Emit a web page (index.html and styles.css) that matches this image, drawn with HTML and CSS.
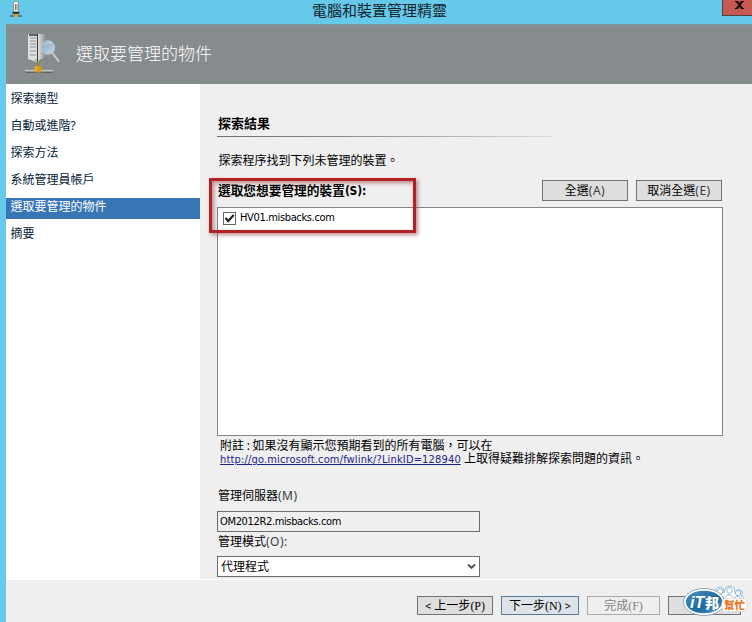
FILE: index.html
```html
<!DOCTYPE html>
<html lang="zh-Hant">
<head>
<meta charset="utf-8">
<title>電腦和裝置管理精靈</title>
<link rel="stylesheet" href="styles.css">
</head>
<body>
<div class="window">
  <header class="titlebar">
    <svg class="app-icon" width="14" height="18" viewBox="0 0 14 18">
      <path d="M4.500 1.500h5v10h-5z" fill="#f4f3ed" stroke="#8a9490"/>
      <path d="M6.500 4v6M8 4v6" stroke="#59605f" stroke-width=".8"/>
      <path d="M3 12h8l-1 2H4z" fill="#384044"/>
      <path d="M1 16h12" stroke="#5b685a" stroke-width="1.500"/>
      <path d="M5 14h4v3H5z" fill="#d4a12c"/>
    </svg>
    <h1 class="window-title">電腦和裝置管理精靈</h1>
    <div class="close"><svg width="9" height="8" viewBox="0 0 9 8"><path d="M0 0h3l1.500 2L6 0h3v1H8L5.800 3.900 8 7h1v1H6L4.500 5.700 3 8H0V7h1l2.200-3.100L1 1H0z" fill="#1d0808"/></svg></div>
  </header>
  <div class="frame">
    <div class="banner">
      <svg class="banner-icon" width="38" height="42" viewBox="0 0 38 42">
        <defs>
          <linearGradient id="side" x1="0" x2="1"><stop stop-color="#e2e2e2"/><stop offset="1" stop-color="#858889"/></linearGradient>
          <linearGradient id="lens" x1="0" y1="0" x2="1" y2="1"><stop stop-color="#86a6c2"/><stop offset="1" stop-color="#c9d9e4"/></linearGradient>
        </defs>
        <path d="M4 1h9v28l-9-3z" fill="#dedfe0"/>
        <path d="M5 2h8" stroke="#363a3c" stroke-width="1.500"/>
        <path d="M6 5h6M6 8h6M6 11h6M6 14h6M6 18h6M6 22h6" stroke="#8a8e91"/>
        <path d="M14 1h8v22l-8 6z" fill="url(#side)"/>
        <path d="M13.500 1v28" stroke="#303436"/>
        <path d="M28.500 20l6 8" stroke="#cfcbcc" stroke-width="2" stroke-linecap="round"/>
        <circle cx="24" cy="14.500" r="6.800" fill="url(#lens)" stroke="#b7c8d4"/>
        <path d="M20 13q3-5 8-3" fill="none" stroke="#eef6fb" opacity=".6"/>
        <path d="M11 26l3 3 3-3" fill="none" stroke="#77a34c"/>
        <path d="M14 29v5" stroke="#a77e20" stroke-width="2"/>
        <rect x="1" y="36" width="28" height="4" rx="1" fill="#5f6263"/>
        <path d="M1 37.500h28" stroke="#c6c7c7" stroke-width="2"/>
        <rect x="10.500" y="33" width="7" height="6.500" rx="1" fill="#d79a1c"/>
        <path d="M12 34v4" stroke="#f2cd68"/>
      </svg>
      <h2 class="banner-title">選取要管理的物件</h2>
    </div>
    <div class="body">
      <nav class="steps">
        <div class="step">探索類型</div>
        <div class="step">自動或進階?</div>
        <div class="step">探索方法</div>
        <div class="step">系統管理員帳戶</div>
        <div class="step active">選取要管理的物件</div>
        <div class="step">摘要</div>
      </nav>
      <main class="content">
        <h3 class="section">探索結果</h3>
        <div class="rule"></div>
        <p class="intro">探索程序找到下列未管理的裝置。</p>
        <div class="toolbar">
          <div class="list-label">選取您想要管理的裝置<span class="label-key">(S):</span></div>
          <button class="btn small">全選<span class="latin">(A)</span></button>
          <button class="btn small">取消全選<span class="latin">(E)</span></button>
          <div class="highlight"></div>
        </div>
        <div class="list">
          <label class="item">
            <span class="check"><svg width="11" height="11" viewBox="0 0 11 11"><path d="M1.500 5l2.700 3L9.700 2" fill="none" stroke="#222" stroke-width="2.200"/></svg></span>
            <span class="device">HV01.misbacks.com</span>
          </label>
        </div>
        <div class="note">
          <div class="note-line">附註<span class="colon">:</span>如果沒有顯示您預期看到的所有電腦，可以在</div>
          <div class="note-line"><a class="link">http://go.microsoft.com/fwlink/?LinkID=128940</a> 上取得疑難排解探索問題的資訊。</div>
        </div>
        <div class="field-label server">管理伺服器<span class="latin">(M)</span></div>
        <div class="field readonly"><span class="server-name">OM2012R2.misbacks.com</span></div>
        <div class="field-label mode">管理模式<span class="latin">(O):</span></div>
        <div class="field select"><span>代理程式</span><svg width="9" height="7" viewBox="0 0 9 7"><path d="M1 1.500l3.500 3.300L8 1.500" fill="none" stroke="#555" stroke-width="2"/></svg></div>
      </main>
    </div>
    <footer class="footer">
      <button class="btn prev"><span class="arrow">&lt;</span> 上一步<span class="serif">(P)</span></button>
      <button class="btn next">下一步<span class="serif">(N)</span> <span class="arrow">&gt;</span></button>
      <button class="btn finish" disabled>完成<span class="serif">(F)</span></button>
      <button class="btn cancel" aria-label="取消"></button>
      <svg class="badge" width="72" height="34" viewBox="0 0 72 34">
        <defs><linearGradient id="oval" x1="0" y1="0" x2="1" y2="1"><stop stop-color="#4b91bd"/><stop offset=".6" stop-color="#1c689d"/><stop offset="1" stop-color="#5aa6d0"/></linearGradient></defs>
        <g fill="#fff" stroke="#8db9cf">
          <path d="M37 16q-2-4 2-5-2-8 4-8 4 0 4 6 1-7 6-7 5 0 5 7 2-4 5-3 4 1 1 6 4 1 2 5z"/>
          <circle cx="43" cy="7.500" r="2.800"/><circle cx="52.500" cy="6.500" r="2.800"/><circle cx="61" cy="9" r="2.600"/>
          <path d="M39 14.500q4-6 8 0m1-1q4-6 8 0m1 1q3-5 6.500 0" fill="none"/>
        </g>
        <ellipse cx="27" cy="18" rx="20.500" ry="13.500" fill="#fff" stroke="#8caabd"/>
        <ellipse cx="27" cy="18" rx="18.200" ry="11.300" fill="url(#oval)"/>
        <rect x="45" y="14.500" width="25" height="13" rx="4" fill="#fff" stroke="#ddd4cb" stroke-width=".7"/>
        <text class="badge-it" x="13" y="24">iT</text>
        <text class="badge-bang" x="28" y="24">邦</text>
        <text class="badge-help" x="47" y="25">幫忙</text>
      </svg>
    </footer>
  </div>
</div>
</body>
</html>
```
FILE: styles.css
```css
* { box-sizing: border-box; }
html, body { margin: 0; height: 100%; overflow: hidden; }
body {
  font: 12px/14px "Noto Sans", "Noto Sans CJK TC", sans-serif;
  color: #000;
}
h1, h2, h3, p { margin: 0; font-weight: 400; }
.window {
  width: 752px;
  height: 622px;
  display: flex;
  flex-direction: column;
  background: #67c9e9;
}
.titlebar {
  height: 24px;
  display: grid;
  grid-template-columns: 30px 1fr 30px;
  align-items: start;
}
.app-icon { margin-left: 9px; }
.window-title {
  font: 15px/20px "Noto Sans CJK TC", sans-serif;
  color: #10232b;
  padding-left: 282px;
}
.close {
  height: 16px;
  background: #c45a52;
  border: solid #4d4143;
  border-width: 0 0 1px 1px;
  padding: 1px 0 0 12px;
  line-height: 0;
}
.frame {
  flex: 1;
  margin-left: 6px;
  display: flex;
  flex-direction: column;
  background: #efefef;
}
.banner {
  height: 60px;
  background: #868b8e;
  border-top: 1px solid #7897a3;
  display: flex;
  padding-left: 18px;
}
.banner-icon { margin-top: 8px; }
.banner-title {
  font: 300 17px/24px "Noto Sans CJK TC", sans-serif;
  color: #fff;
  margin: 16px 0 0 14px;
}
.body {
  height: 496px;
  display: grid;
  grid-template-columns: 194px 1fr;
  border-bottom: 1px solid #fff;
}
.steps {
  background: #fff;
  padding-top: 6px;
  display: flex;
  flex-direction: column;
  gap: 6px;
}
.step {
  height: 21px;
  line-height: 18px;
  padding-left: 4.500px;
  color: #081c38;
}
.step.active { background: #3775b4; color: #fff; }
.content { padding: 31px 29px 0 17px; }
.section { font-weight: 700; font-size: 13px; line-height: 16px; padding-left: 1px; height: 21px; }
.rule { height: 1px; width: 336px; background: linear-gradient(90deg, #6c6c6c, #8e8e8e 40%, #dcdcdc); }
.intro { margin-top: 17px; padding-left: 1.500px; height: 26px; }
.toolbar {
  position: relative;
  height: 27px;
  display: flex;
  gap: 8px;
}
.list-label {
  flex: 1;
  font-weight: 700;
  font-size: 12.700px;
  line-height: 21px;
  padding-left: 1px;
}
.label-key { font: 700 12px "DejaVu Sans Condensed", sans-serif; letter-spacing: -.2px; }
.btn {
  font: inherit;
  line-height: 17px;
  color: #000;
  background: #dedede;
  border: 1px solid #727272;
  padding: 0;
  margin: 0;
  white-space: pre;
}
.small { width: 86px; height: 21px; }
.small:nth-of-type(2) { margin-right: 1px; }
.latin { font-size: 12px; letter-spacing: .5px; color: #343e40; }
.highlight {
  position: absolute;
  left: -8px;
  top: -2px;
  width: 207px;
  height: 55px;
  border: 3px solid #b32124;
  box-shadow: 2px 2px 4px #9b5658aa, inset 2px 2px 4px #9b5658aa;
}
.list {
  height: 229px;
  background: #fff;
  border: 1px solid #838589;
  padding: 3px 0 0 5px;
}
.item { display: flex; align-items: center; gap: 4px; }
.check {
  width: 13px;
  height: 13px;
  border: 1px solid #666;
  background: #fff;
  line-height: 0;
}
.device, .server-name { font: 11px/14px "DejaVu Sans Condensed", sans-serif; letter-spacing: -.35px; }
.note { padding: 3px 0 0 3px; height: 53px; }
.note-line { height: 13px; line-height: 14px; white-space: pre; }
.colon { display: inline-block; width: 8.500px; text-align: center; }
.link {
  font: 11px/13px "DejaVu Sans Condensed", sans-serif;
  letter-spacing: .16px;
  color: #20228c;
  text-decoration: underline;
}
.server { height: 22px; }
.field-label { padding-left: 1px; }
.field {
  width: 263px;
  height: 21px;
  border: 1px solid #6c6c6c;
  padding-left: 2px;
  display: flex;
  align-items: center;
}
.mode { height: 24px; padding-top: 3px; }
.select { background: #fff; padding: 0 3px; justify-content: space-between; }
.footer {
  position: relative;
  flex: 1;
  display: flex;
  gap: 8px;
  padding: 16px 0 0 411px;
}
.footer .btn { height: 19px; line-height: 16px; }
.prev { width: 76px; }
.next { width: 78px; }
.footer .next { border-color: #587b98; background: #dde3e8; }
.finish { width: 73px; }
.footer .finish { color: #828282; border-color: #aaa; background: #efefef; }
.cancel { width: 73px; }
.serif { font: 12px "Liberation Serif", serif; }
.arrow { font-size: 11px; }
.badge { position: absolute; left: 671px; top: 4px; }
.badge-it { font: italic 700 16px "Liberation Sans", sans-serif; fill: #fff; }
.badge-bang { font: 900 14px "Noto Sans CJK TC", sans-serif; fill: #fff; }
.badge-help { font: 900 10.500px "Noto Sans CJK TC", sans-serif; fill: #e87728; }
```
